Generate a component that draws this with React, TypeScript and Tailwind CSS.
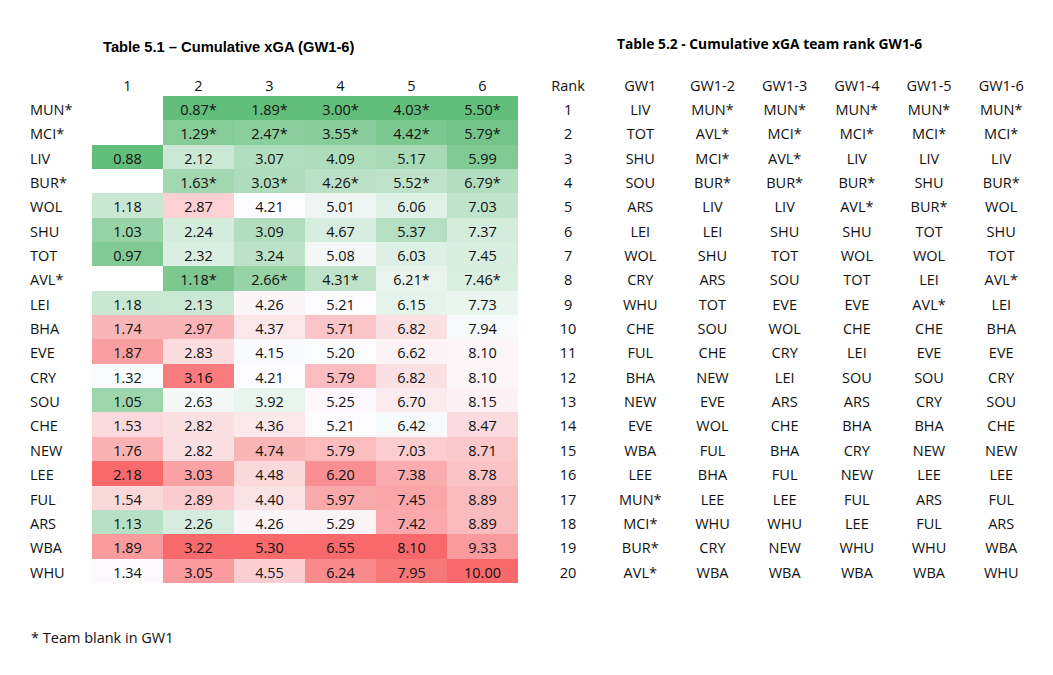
import React from "react";

const xga: [string, (string | null)[]][] = [
  ["MUN*", [null, "0.87*", "1.89*", "3.00*", "4.03*", "5.50*"]],
  ["MCI*", [null, "1.29*", "2.47*", "3.55*", "4.42*", "5.79*"]],
  ["LIV", ["0.88", "2.12", "3.07", "4.09", "5.17", "5.99"]],
  ["BUR*", [null, "1.63*", "3.03*", "4.26*", "5.52*", "6.79*"]],
  ["WOL", ["1.18", "2.87", "4.21", "5.01", "6.06", "7.03"]],
  ["SHU", ["1.03", "2.24", "3.09", "4.67", "5.37", "7.37"]],
  ["TOT", ["0.97", "2.32", "3.24", "5.08", "6.03", "7.45"]],
  ["AVL*", [null, "1.18*", "2.66*", "4.31*", "6.21*", "7.46*"]],
  ["LEI", ["1.18", "2.13", "4.26", "5.21", "6.15", "7.73"]],
  ["BHA", ["1.74", "2.97", "4.37", "5.71", "6.82", "7.94"]],
  ["EVE", ["1.87", "2.83", "4.15", "5.20", "6.62", "8.10"]],
  ["CRY", ["1.32", "3.16", "4.21", "5.79", "6.82", "8.10"]],
  ["SOU", ["1.05", "2.63", "3.92", "5.25", "6.70", "8.15"]],
  ["CHE", ["1.53", "2.82", "4.36", "5.21", "6.42", "8.47"]],
  ["NEW", ["1.76", "2.82", "4.74", "5.79", "7.03", "8.71"]],
  ["LEE", ["2.18", "3.03", "4.48", "6.20", "7.38", "8.78"]],
  ["FUL", ["1.54", "2.89", "4.40", "5.97", "7.45", "8.89"]],
  ["ARS", ["1.13", "2.26", "4.26", "5.29", "7.42", "8.89"]],
  ["WBA", ["1.89", "3.22", "5.30", "6.55", "8.10", "9.33"]],
  ["WHU", ["1.34", "3.05", "4.55", "6.24", "7.95", "10.00"]],
];

const ranks = [
  ["LIV", "MUN*", "MUN*", "MUN*", "MUN*", "MUN*"],
  ["TOT", "AVL*", "MCI*", "MCI*", "MCI*", "MCI*"],
  ["SHU", "MCI*", "AVL*", "LIV", "LIV", "LIV"],
  ["SOU", "BUR*", "BUR*", "BUR*", "SHU", "BUR*"],
  ["ARS", "LIV", "LIV", "AVL*", "BUR*", "WOL"],
  ["LEI", "LEI", "SHU", "SHU", "TOT", "SHU"],
  ["WOL", "SHU", "TOT", "WOL", "WOL", "TOT"],
  ["CRY", "ARS", "SOU", "TOT", "LEI", "AVL*"],
  ["WHU", "TOT", "EVE", "EVE", "AVL*", "LEI"],
  ["CHE", "SOU", "WOL", "CHE", "CHE", "BHA"],
  ["FUL", "CHE", "CRY", "LEI", "EVE", "EVE"],
  ["BHA", "NEW", "LEI", "SOU", "SOU", "CRY"],
  ["NEW", "EVE", "ARS", "ARS", "CRY", "SOU"],
  ["EVE", "WOL", "CHE", "BHA", "BHA", "CHE"],
  ["WBA", "FUL", "BHA", "CRY", "NEW", "NEW"],
  ["LEE", "BHA", "FUL", "NEW", "LEE", "LEE"],
  ["MUN*", "LEE", "LEE", "FUL", "ARS", "FUL"],
  ["MCI*", "WHU", "WHU", "LEE", "FUL", "ARS"],
  ["BUR*", "CRY", "NEW", "WHU", "WHU", "WBA"],
  ["AVL*", "WBA", "WBA", "WBA", "WBA", "WHU"],
];

const rankHeads = ["Rank", "GW1", "GW1-2", "GW1-3", "GW1-4", "GW1-5", "GW1-6"];

// excel style green - white - red scale, one per column
const green = [99, 190, 123];
const white = [252, 252, 255];
const red = [248, 105, 107];

const stats = [0, 1, 2, 3, 4, 5].map((c) => {
  const vals = xga
    .map(([, r]) => r[c])
    .filter((v): v is string => v !== null)
    .map((v) => parseFloat(v))
    .sort((a, b) => a - b);
  const pos = (vals.length - 1) / 2;
  const lo = Math.floor(pos);
  const mid = vals[lo] + (vals[Math.ceil(pos)] - vals[lo]) * (pos - lo);
  return { min: vals[0], mid, max: vals[vals.length - 1] };
});

function cellColor(v: number, c: number) {
  const { min, mid, max } = stats[c];
  let a = green;
  let b = white;
  let t = 0;
  if (v <= mid) {
    t = mid === min ? 1 : (v - min) / (mid - min);
  } else {
    a = white;
    b = red;
    t = (v - mid) / (max - mid);
  }
  const mix = a.map((x, i) => Math.round(x + (b[i] - x) * t));
  return `rgb(${mix[0]}, ${mix[1]}, ${mix[2]})`;
}

export default function App() {
  return (
    <div className="w-[1053px] h-[675px] bg-white text-[#111] font-['Open_Sans',sans-serif] text-[14.5px] overflow-hidden">
      <div className="flex pt-[33px]">
        <div className="pl-[30px] w-[532px] shrink-0">
          <div className="h-[39px] pt-[6px] pl-[73px]">
            <div className="font-['Liberation_Sans',Arial,sans-serif] font-bold text-[14.7px] leading-[16px] text-black whitespace-nowrap">
              Table 5.1 – Cumulative xGA (GW1-6)
            </div>
          </div>
          <div className="flex h-[24px] pt-[3px] leading-[22px]">
            <div className="w-[62px] shrink-0" />
            {[1, 2, 3, 4, 5, 6].map((n) => (
              <div key={n} className="w-[71px] shrink-0 text-center">
                {n}
              </div>
            ))}
          </div>
          {xga.map(([team, row]) => (
            <div key={team} className="flex h-[24.35px]">
              <div className="w-[62px] shrink-0 pt-[3px] leading-[22px]">{team}</div>
              {row.map((v, c) => (
                <div
                  key={c}
                  className="w-[71px] shrink-0 pt-[3px] leading-[22px] text-center"
                  style={v ? { backgroundColor: cellColor(parseFloat(v), c) } : undefined}
                >
                  {v}
                </div>
              ))}
            </div>
          ))}
        </div>
        <div className="w-[506px] shrink-0">
          <div className="h-[39px] pt-[1px] pl-[85px]">
            <div className="font-bold text-[13.8px] leading-[20px] text-black whitespace-nowrap">
              Table 5.2 - Cumulative xGA team rank GW1-6
            </div>
          </div>
          <div className="flex h-[24px] pt-[3px] leading-[22px]">
            {rankHeads.map((h) => (
              <div key={h} className="w-[72.2px] shrink-0 text-center">
                {h}
              </div>
            ))}
          </div>
          {ranks.map((row, i) => (
            <div key={i} className="flex h-[24.35px] pt-[3px] leading-[22px]">
              <div className="w-[72.2px] shrink-0 text-center">{i + 1}</div>
              {row.map((t, c) => (
                <div key={c} className="w-[72.2px] shrink-0 text-center">
                  {t}
                </div>
              ))}
            </div>
          ))}
        </div>
      </div>
      <div className="mt-[45.6px] pl-[31px] leading-[20px]">* Team blank in GW1</div>
    </div>
  );
}
